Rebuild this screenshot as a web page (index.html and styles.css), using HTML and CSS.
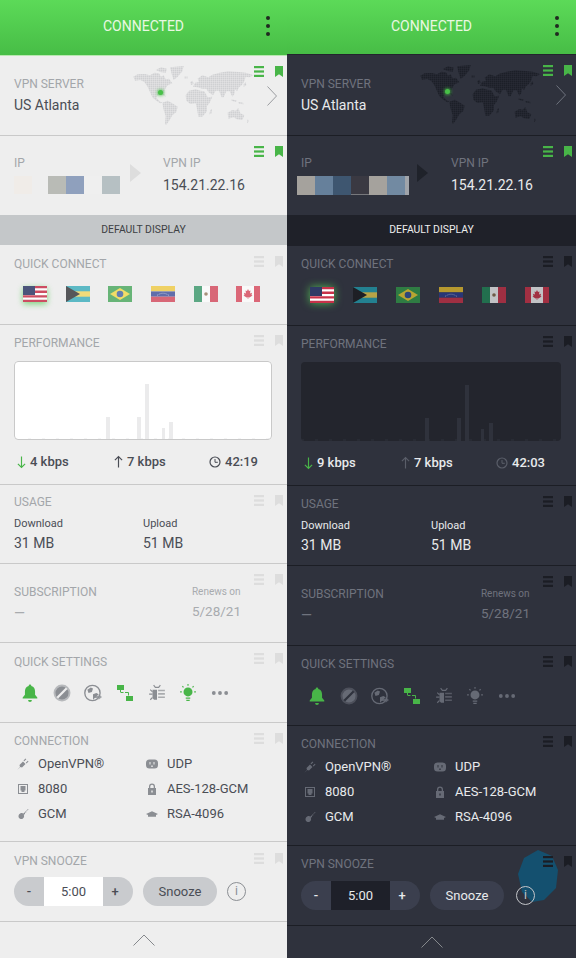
FILE: index.html
```html
<!DOCTYPE html>
<html lang="en">
<head>
  <meta charset="UTF-8">
  <title>VPN Dashboard</title>
  <link rel="stylesheet" href="styles.css">
</head>
<body>
  <svg class="defs" width="0" height="0">
    <defs>
      <pattern id="dots-light" width="6" height="6" patternUnits="userSpaceOnUse"><rect width="5" height="5" fill="#cfd0d2"/></pattern>
      <pattern id="dots-dark" width="6" height="6" patternUnits="userSpaceOnUse"><rect width="5" height="5" fill="#1c1f27"/></pattern>
    </defs>
    <symbol id="menu" viewBox="0 0 10 11"><rect width="10" height="2.2"/><rect y="4.4" width="10" height="2.2"/><rect y="8.8" width="10" height="2.2"/></symbol>
    <symbol id="mark" viewBox="0 0 8 11"><path d="M0 0h8v11L4 8.3 0 11z"/></symbol>
    <symbol id="map" viewBox="0 0 489 240">
      <path d="M25 62 38 55 60 54 75 58 88 50 102 52 108 62 116 58 122 70 132 68 142 82 128 88 120 100 118 112 122 122 112 116 98 118 94 126 104 136 112 140 106 142 94 134 82 124 76 110 68 92 58 78 46 72 30 74z"/>
      <path d="M92 42 108 34 126 38 122 50 106 48z"/>
      <path d="M135 34 176 30 172 46 158 62 146 72 140 54z"/>
      <path d="M178 62h10v5h-10z"/>
      <path d="M196 78l7-4 3 10-8 3z"/>
      <path d="M112 140 128 134 142 142 158 152 154 168 142 178 134 192 124 206 120 204 122 180 116 162z"/>
      <path d="M182 118 192 104 212 100 226 104 238 106 248 124 262 122 254 140 246 150 246 166 232 182 220 182 216 158 212 142 196 144 184 134z"/>
      <path d="M256 162l5-3-2 14-6 2z"/>
      <path d="M204 92 210 80 222 78 218 68 232 58 250 64 262 56 284 50 310 46 340 48 362 50 386 58 372 64 362 62 358 76 350 88 342 94 336 106 330 100 328 114 322 122 314 106 304 106 296 124 290 124 282 104 272 104 264 118 250 108 244 98 232 98 218 94z"/>
      <path d="M356 84l6-5 2 8-8 6z"/>
      <path d="M320 130l16 4-4 4-12-4zM340 138l14 2 2 5-14-2z"/>
      <path d="M308 170 322 162 332 164 340 156 346 172 358 178 352 192 336 190 326 184 310 188z"/>
      <path d="M368 190l4 6-6 6z"/>
    </symbol>
    <symbol id="us" viewBox="0 0 24 16">
      <rect width="24" height="16" fill="#fff"/>
      <path d="M0 0h24v2.3H0zM0 4.6h24v2.3H0zM0 9.2h24v2.3H0zM0 13.7h24V16H0z" fill="#c8324a"/>
      <rect width="12" height="9" fill="#2f3a66"/>
    </symbol>
    <symbol id="bs" viewBox="0 0 24 16">
      <rect width="24" height="16" fill="#1fa3b5"/><rect y="5.3" width="24" height="5.4" fill="#f2d34a"/>
      <path d="M0 0 14 8 0 16z" fill="#17181c"/>
    </symbol>
    <symbol id="br" viewBox="0 0 24 16">
      <rect width="24" height="16" fill="#2f9c46"/><path d="M12 2 22 8 12 14 2 8z" fill="#f3d62e"/><circle cx="12" cy="8" r="3.3" fill="#2b4f96"/>
    </symbol>
    <symbol id="ve" viewBox="0 0 24 16">
      <rect width="24" height="5.4" fill="#f0c52a"/><rect y="5.4" width="24" height="5.3" fill="#26398f"/><rect y="10.7" width="24" height="5.3" fill="#cf2f45"/>
      <path d="M6 9.5Q12 5 18 9.5" fill="none" stroke="#dfe3ef" stroke-width=".7" stroke-dasharray="1 1"/>
    </symbol>
    <symbol id="mx" viewBox="0 0 24 16">
      <rect width="8" height="16" fill="#1d8a56"/><rect x="8" width="8" height="16" fill="#fff"/><rect x="16" width="8" height="16" fill="#cf2f45"/><circle cx="12" cy="8" r="1.8" fill="#8a6a4a"/>
    </symbol>
    <symbol id="ca" viewBox="0 0 24 16">
      <rect width="24" height="16" fill="#fff"/><rect width="6" height="16" fill="#d32f45"/><rect x="18" width="6" height="16" fill="#d32f45"/>
      <path d="M12 3 13 5 14.5 4.5 14 7.5 16 6.8 15.5 9 16.5 9.5 13.5 11.5 12.3 11.3V13H11.7V11.3L10.5 11.5 7.5 9.5 8.5 9 8 6.8 10 7.5 9.5 4.5 11 5z" fill="#d32f45"/>
    </symbol>
    <symbol id="down" viewBox="0 0 10 14"><path d="M5 1v12M1 9l4 4 4-4" fill="none" stroke="currentColor" stroke-width="1.3"/></symbol>
    <symbol id="up" viewBox="0 0 10 14"><path d="M5 13V1M1 5l4-4 4 4" fill="none" stroke="currentColor" stroke-width="1.3"/></symbol>
    <symbol id="clock" viewBox="0 0 12 12"><circle cx="6" cy="6" r="5" fill="none" stroke="currentColor" stroke-width="1.2"/><path d="M6 3v3.3h2.8" fill="none" stroke="currentColor"/></symbol>
    <symbol id="bell" viewBox="0 0 16 16"><path d="M8 .5a1.2 1.2 0 0 1 1.2 1.2c2.4.6 3.3 2.6 3.3 5v2.8l2 2.5v.8H1.5v-.8l2-2.5V6.700c0-2.400.9-4.400 3.300-5A1.200 1.200 0 0 1 8 .5zM6.300 14.200h3.400a1.700 1.700 0 0 1-3.400 0z"/></symbol>
    <symbol id="block" viewBox="0 0 16 16"><circle cx="8" cy="8" r="7.5" opacity=".55"/><circle cx="8" cy="8" r="5.8"/><path d="M3.800 12.200 12.200 3.800" stroke="var(--bg)" stroke-width="2"/></symbol>
    <symbol id="globe" viewBox="0 0 16 16"><circle cx="7.500" cy="8" r="6.800" fill="none" stroke="currentColor" stroke-width="1.200"/><path d="M3 5l3-2 2 1-1 3-3 1zM8 9l3-1 2 1-3 3-2 2z"/><path d="M8 10.500h5V9l3 2.500L13 14v-1.500H8z" opacity=".8"/></symbol>
    <symbol id="net" viewBox="0 0 18 18"><rect x="1" y="1" width="7" height="5"/><rect x="10" y="12" width="7" height="5"/><path d="M4.500 6v2M4.500 8.500h3M9 8.500h3.500v3" fill="none" stroke="currentColor" stroke-width="1"/></symbol>
    <symbol id="bug" viewBox="0 0 16 16"><path d="M5 1l1.500 2h3L11 1M2 5l2 2M1 9h3M2 14l2-2" fill="none" stroke="currentColor"/><path d="M4 5h4v9H6.500C5 14 4 13 4 11z"/><path d="M9 5h6v1.500H9zM9 8h6v1.500H9zM9 11h6v1.500H9z" opacity=".7"/></symbol>
    <symbol id="bulb" viewBox="0 0 16 16"><circle cx="8" cy="7" r="4"/><path d="M6 12.500h4M6.500 14.500h3M8 0v1.500M1 7h1.500M13.500 7H15M3 2l1 1M13 2l-1 1" fill="none" stroke="currentColor"/></symbol>
    <symbol id="dots" viewBox="0 0 16 16"><circle cx="2.500" cy="8" r="1.700"/><circle cx="8" cy="8" r="1.700"/><circle cx="13.500" cy="8" r="1.700"/></symbol>
    <symbol id="plug" viewBox="0 0 12 12"><path d="M0 12 3 9 2.500 7 6 3.500 8.500 6 5 9.500 3.500 9zM6.500 2.500 8.500.5 9.300 1.300 7.300 3.300zM8.800 4.800 10.800 2.800 11.500 3.500 9.500 5.500z"/></symbol>
    <symbol id="port" viewBox="0 0 12 12"><path d="M1 1h10v10H1zM2 2v8h8V2zM3.500 3h5v4.500h-1V9h-3V7.500h-1z" fill-rule="evenodd"/></symbol>
    <symbol id="key" viewBox="0 0 12 12"><path d="M11 1 6.500 5.500C5 4.500 3 5 2 6.500 1 8 1.500 10 3 10.700 4.500 11.500 6.500 10.800 7 9 7.200 8.200 7.100 7.500 6.800 6.800L8 6V4.500H9.200V3.200L11.500 1.500z"/></symbol>
    <symbol id="outlet" viewBox="0 0 12 12"><path d="M3.500 1.500h5a3.500 3.500 0 0 1 3.500 3.500v2a3.500 3.500 0 0 1-3.500 3.500h-5A3.500 3.500 0 0 1 0 7V5a3.500 3.500 0 0 1 3.500-3.500zM3.500 4v2.500h1V4zM7.500 4v2.500h1V4zM5.300 7.500v1.500h1.400V7.500z" fill-rule="evenodd"/></symbol>
    <symbol id="lock" viewBox="0 0 12 12"><path d="M2 5h1V3.500a3 3 0 0 1 6 0V5h1v7H2zM4.300 5h3.400V3.500a1.700 1.700 0 0 0-3.400 0zM5.300 7.500v2h1.400v-2z" fill-rule="evenodd"/></symbol>
    <symbol id="cap" viewBox="0 0 12 12"><path d="M0 6 6 3.200 12 6 10 7v1.800H2V7z"/></symbol>
  </svg>

  <main class="screens">
    <div class="panel light">
      <header class="topbar"><span>CONNECTED</span><i class="kebab"></i></header>

      <section class="card card-server">
        <svg class="worldmap"><use href="#map"/></svg><b class="pin"></b>
        <div class="corner on"><svg class="ic-menu"><use href="#menu"/></svg><svg class="ic-mark"><use href="#mark"/></svg></div>
        <h2>VPN SERVER</h2>
        <p class="value">US Atlanta</p>
        <svg class="chevron" viewBox="0 0 10 20"><path d="M.5.5 9.500 10 .5 19.500"/></svg>
      </section>

      <section class="card card-ip">
        <div class="corner on"><svg class="ic-menu"><use href="#menu"/></svg><svg class="ic-mark"><use href="#mark"/></svg></div>
        <div class="ip-col">
          <h2>IP</h2>
          <div class="blur-ip">
            <span class="px1"></span><span class="gap"></span><span class="px2"></span><span class="px3"></span><span class="px4"></span><span class="px5"></span>
          </div>
        </div>
        <i class="ip-arrow"></i>
        <div class="ip-col ip-vpn">
          <h2>VPN IP</h2>
          <p class="value">154.21.22.16</p>
        </div>
      </section>

      <div class="display-bar">DEFAULT DISPLAY</div>

      <section class="card card-quick">
        <div class="corner"><svg class="ic-menu"><use href="#menu"/></svg><svg class="ic-mark"><use href="#mark"/></svg></div>
        <h2>QUICK CONNECT</h2>
        <div class="flags">
          <svg class="flag active"><use href="#us"/></svg>
          <svg class="flag"><use href="#bs"/></svg>
          <svg class="flag"><use href="#br"/></svg>
          <svg class="flag"><use href="#ve"/></svg>
          <svg class="flag"><use href="#mx"/></svg>
          <svg class="flag"><use href="#ca"/></svg>
        </div>
      </section>

      <section class="card card-perf">
        <div class="corner"><svg class="ic-menu"><use href="#menu"/></svg><svg class="ic-mark"><use href="#mark"/></svg></div>
        <h2>PERFORMANCE</h2>
        <svg class="chart" viewBox="0 0 258 79">
          <path class="ticks" d="M0 78h258"/>
          <rect x="92" y="56" width="4" height="23"/><rect x="123" y="56" width="4" height="23"/><rect x="131" y="23" width="4" height="56"/><rect x="148" y="67" width="3" height="12"/><rect x="155" y="61" width="4" height="18"/>
        </svg>
        <div class="stats">
          <span class="stat"><svg class="arrow green"><use href="#down"/></svg>4 kbps</span>
          <span class="stat"><svg class="arrow"><use href="#up"/></svg>7 kbps</span>
          <span class="stat"><svg class="clock"><use href="#clock"/></svg>42:19</span>
        </div>
      </section>

      <section class="card card-usage">
        <div class="corner"><svg class="ic-menu"><use href="#menu"/></svg><svg class="ic-mark"><use href="#mark"/></svg></div>
        <h2>USAGE</h2>
        <div class="usage-grid">
          <div><p class="caption">Download</p><p class="value">31 MB</p></div>
          <div><p class="caption">Upload</p><p class="value">51 MB</p></div>
        </div>
      </section>

      <section class="card card-sub">
        <div class="corner"><svg class="ic-menu"><use href="#menu"/></svg><svg class="ic-mark"><use href="#mark"/></svg></div>
        <div class="sub-col"><h2>SUBSCRIPTION</h2><p class="value dim">—</p></div>
        <div class="sub-col renews"><p class="caption dim">Renews on</p><p class="value dim">5/28/21</p></div>
      </section>

      <section class="card card-settings">
        <div class="corner"><svg class="ic-menu"><use href="#menu"/></svg><svg class="ic-mark"><use href="#mark"/></svg></div>
        <h2>QUICK SETTINGS</h2>
        <div class="settings">
          <svg class="green"><use href="#bell"/></svg>
          <svg class="grey"><use href="#block"/></svg>
          <svg class="grey"><use href="#globe"/></svg>
          <svg class="green"><use href="#net"/></svg>
          <svg class="grey"><use href="#bug"/></svg>
          <svg class="green"><use href="#bulb"/></svg>
          <svg class="grey"><use href="#dots"/></svg>
        </div>
      </section>

      <section class="card card-conn">
        <div class="corner"><svg class="ic-menu"><use href="#menu"/></svg><svg class="ic-mark"><use href="#mark"/></svg></div>
        <h2>CONNECTION</h2>
        <div class="conn-grid">
          <span class="conn"><svg><use href="#plug"/></svg>OpenVPN®</span>
          <span class="conn"><svg><use href="#outlet"/></svg>UDP</span>
          <span class="conn"><svg><use href="#port"/></svg>8080</span>
          <span class="conn"><svg><use href="#lock"/></svg>AES-128-GCM</span>
          <span class="conn"><svg><use href="#key"/></svg>GCM</span>
          <span class="conn"><svg><use href="#cap"/></svg>RSA-4096</span>
        </div>
      </section>

      <section class="card card-snooze">
        <div class="corner"><svg class="ic-menu"><use href="#menu"/></svg><svg class="ic-mark"><use href="#mark"/></svg></div>
        <h2>VPN SNOOZE</h2>
        <div class="snooze-row">
          <div class="stepper"><span>-</span><b>5:00</b><span class="plus">+</span></div>
          <button class="snooze-btn">Snooze</button>
          <span class="info">i</span>
        </div>
      </section>

      <footer class="foot"><svg viewBox="0 0 22 12"><path d="M.5 11.500 11 1l10.500 10.500"/></svg></footer>
    </div>

    <div class="panel dark">
      <header class="topbar"><span>CONNECTED</span><i class="kebab"></i></header>

      <section class="card card-server">
        <svg class="worldmap"><use href="#map"/></svg><b class="pin"></b>
        <div class="corner on"><svg class="ic-menu"><use href="#menu"/></svg><svg class="ic-mark"><use href="#mark"/></svg></div>
        <h2>VPN SERVER</h2>
        <p class="value">US Atlanta</p>
        <svg class="chevron" viewBox="0 0 10 20"><path d="M.5.5 9.500 10 .5 19.500"/></svg>
      </section>

      <section class="card card-ip">
        <div class="corner on"><svg class="ic-menu"><use href="#menu"/></svg><svg class="ic-mark"><use href="#mark"/></svg></div>
        <div class="ip-col">
          <h2>IP</h2>
          <div class="blur-ip">
            <span class="px1"></span><span class="px2"></span><span class="px3"></span><span class="px4"></span><span class="px5"></span><span class="px6"></span><span class="px7"></span>
          </div>
        </div>
        <i class="ip-arrow"></i>
        <div class="ip-col ip-vpn">
          <h2>VPN IP</h2>
          <p class="value">154.21.22.16</p>
        </div>
      </section>

      <div class="display-bar">DEFAULT DISPLAY</div>

      <section class="card card-quick">
        <div class="corner"><svg class="ic-menu"><use href="#menu"/></svg><svg class="ic-mark"><use href="#mark"/></svg></div>
        <h2>QUICK CONNECT</h2>
        <div class="flags">
          <svg class="flag active"><use href="#us"/></svg>
          <svg class="flag"><use href="#bs"/></svg>
          <svg class="flag"><use href="#br"/></svg>
          <svg class="flag"><use href="#ve"/></svg>
          <svg class="flag"><use href="#mx"/></svg>
          <svg class="flag"><use href="#ca"/></svg>
        </div>
      </section>

      <section class="card card-perf">
        <div class="corner"><svg class="ic-menu"><use href="#menu"/></svg><svg class="ic-mark"><use href="#mark"/></svg></div>
        <h2>PERFORMANCE</h2>
        <svg class="chart" viewBox="0 0 260 79">
          <path class="ticks" d="M0 78h260"/>
          <rect x="124" y="56" width="4" height="23"/><rect x="156" y="56" width="4" height="23"/><rect x="164" y="23" width="4" height="56"/><rect x="180" y="67" width="3" height="12"/><rect x="188" y="61" width="4" height="18"/>
        </svg>
        <div class="stats">
          <span class="stat"><svg class="arrow green"><use href="#down"/></svg>9 kbps</span>
          <span class="stat"><svg class="arrow faint"><use href="#up"/></svg>7 kbps</span>
          <span class="stat"><svg class="clock faint"><use href="#clock"/></svg>42:03</span>
        </div>
      </section>

      <section class="card card-usage">
        <div class="corner"><svg class="ic-menu"><use href="#menu"/></svg><svg class="ic-mark"><use href="#mark"/></svg></div>
        <h2>USAGE</h2>
        <div class="usage-grid">
          <div><p class="caption">Download</p><p class="value">31 MB</p></div>
          <div><p class="caption">Upload</p><p class="value">51 MB</p></div>
        </div>
      </section>

      <section class="card card-sub">
        <div class="corner"><svg class="ic-menu"><use href="#menu"/></svg><svg class="ic-mark"><use href="#mark"/></svg></div>
        <div class="sub-col"><h2>SUBSCRIPTION</h2><p class="value dim">—</p></div>
        <div class="sub-col renews"><p class="caption dim">Renews on</p><p class="value dim">5/28/21</p></div>
      </section>

      <section class="card card-settings">
        <div class="corner"><svg class="ic-menu"><use href="#menu"/></svg><svg class="ic-mark"><use href="#mark"/></svg></div>
        <h2>QUICK SETTINGS</h2>
        <div class="settings">
          <svg class="green"><use href="#bell"/></svg>
          <svg class="grey"><use href="#block"/></svg>
          <svg class="grey"><use href="#globe"/></svg>
          <svg class="green"><use href="#net"/></svg>
          <svg class="grey"><use href="#bug"/></svg>
          <svg class="grey"><use href="#bulb"/></svg>
          <svg class="grey"><use href="#dots"/></svg>
        </div>
      </section>

      <section class="card card-conn">
        <div class="corner"><svg class="ic-menu"><use href="#menu"/></svg><svg class="ic-mark"><use href="#mark"/></svg></div>
        <h2>CONNECTION</h2>
        <div class="conn-grid">
          <span class="conn"><svg><use href="#plug"/></svg>OpenVPN®</span>
          <span class="conn"><svg><use href="#outlet"/></svg>UDP</span>
          <span class="conn"><svg><use href="#port"/></svg>8080</span>
          <span class="conn"><svg><use href="#lock"/></svg>AES-128-GCM</span>
          <span class="conn"><svg><use href="#key"/></svg>GCM</span>
          <span class="conn"><svg><use href="#cap"/></svg>RSA-4096</span>
        </div>
      </section>

      <section class="card card-snooze">
        <svg class="watermark" viewBox="0 0 40 52"><path d="M20 0 34 6 40 20 38 38 26 50 14 52 4 42 0 24 6 8z"/></svg>
        <div class="corner"><svg class="ic-menu"><use href="#menu"/></svg><svg class="ic-mark"><use href="#mark"/></svg></div>
        <h2>VPN SNOOZE</h2>
        <div class="snooze-row">
          <div class="stepper"><span>-</span><b>5:00</b><span class="plus">+</span></div>
          <button class="snooze-btn">Snooze</button>
          <span class="info">i</span>
        </div>
      </section>

      <footer class="foot"><svg viewBox="0 0 22 12"><path d="M.5 11.500 11 1l10.500 10.500"/></svg></footer>
    </div>
  </main>
</body>
</html>
```

FILE: styles.css
```css
* {
  box-sizing: border-box;
}

body {
  margin: 0;
  font-family: Roboto, "Liberation Sans", sans-serif;
  overflow: hidden;
}

h2, p {
  margin: 0;
  font-weight: 400;
}

.defs {
  position: absolute;
}

.screens {
  display: grid;
  grid-template-columns: 287px 289px;
  height: 958px;
}

.panel {
  display: flex;
  flex-direction: column;
  height: 958px;
  background: var(--bg);
}

.light {
  --bg: #eeeeee;
  --line: #c9c9c9;
  --label: #a3a6aa;
  --text: #4a4d55;
  --dim: #a8abae;
  --ghost: #dddddd;
  --icon: #8b8e93;
  --bar: #c4c7c9;
  --bar-text: #3c3f44;
  --chart: #ffffff;
  --chart-bar: #ebebec;
  --pill: #c9cbce;
  --field: #ffffff;
}

.dark {
  --bg: #2f323d;
  --line: #1c1e25;
  --label: #6f737e;
  --text: #e8eaec;
  --dim: #6f737e;
  --ghost: #1b1d24;
  --icon: #666a75;
  --bar: #1f2129;
  --bar-text: #eeeeee;
  --chart: #23252d;
  --chart-bar: #2f323c;
  --pill: #3b3f4e;
  --field: #1e2029;
}

/* top green bar */
.topbar {
  position: relative;
  display: flex;
  align-items: center;
  justify-content: center;
  flex: none;
  height: 56px;
  padding-bottom: 3px;
  color: #e9f8e2;
  font-size: 14px;
  background: linear-gradient(#5cda58, #47bd46);
  border-bottom: 1px solid #b8e8b0;
}

.dark .topbar {
  height: 55px;
  border-bottom-color: #23252d;
}

.kebab {
  position: absolute;
  top: 16px;
  left: 266px;
  width: 4px;
  height: 4px;
  border-radius: 50%;
  background: #202a20;
  box-shadow: 0 8px 0 #202a20, 0 16px 0 #202a20;
}

.dark .kebab {
  left: 268px;
}

.card {
  position: relative;
  flex: none;
  padding: 11px 14px 0;
  border-bottom: 1px solid var(--line);
}

.card h2 {
  font-size: 12px;
  line-height: 14px;
  color: var(--label);
}

.value {
  font-size: 14px;
  line-height: 18px;
  color: var(--text);
}

.value.dim,
.caption.dim {
  color: var(--dim);
}

.caption {
  font-size: 11px;
  line-height: 14px;
  color: var(--text);
}

.corner {
  position: absolute;
  top: 10px;
  right: 4px;
  z-index: 2;
  display: flex;
  gap: 11px;
  fill: var(--ghost);
}

.corner.on {
  fill: #48b548;
}

.ic-menu {
  width: 10px;
  height: 11px;
}

.ic-mark {
  width: 8px;
  height: 11px;
}

/* vpn server */
.card-server {
  height: 80px;
  padding-top: 21px;
}

.dark .card-server {
  height: 81px;
  padding-top: 22px;
}

.card-server .value {
  margin-top: 5px;
}

.worldmap {
  position: absolute;
  top: 0;
  left: 125px;
  width: 163px;
  height: 80px;
  filter: blur(0.4px);
}

.light .worldmap {
  fill: url(#dots-light);
}

.dark .worldmap {
  fill: url(#dots-dark);
}

.pin {
  position: absolute;
  top: 34px;
  left: 158px;
  width: 5px;
  height: 5px;
  border-radius: 50%;
  background: #48c048;
  box-shadow: 0 0 3px 1px rgba(72, 192, 72, 0.7);
}

.chevron {
  position: absolute;
  top: 30px;
  left: 267px;
  width: 10px;
  height: 20px;
  fill: none;
  stroke: #9a9ca0;
}

.dark .chevron {
  left: 269px;
  stroke: #6f737e;
}

/* ip row */
.card-ip {
  display: flex;
  height: 79px;
  padding-top: 20px;
  border-bottom: none;
}

.ip-col {
  flex: none;
  width: 116px;
}

.ip-vpn {
  margin-left: 22px;
}

.dark .ip-vpn {
  margin-left: 23px;
}

.ip-vpn .value {
  margin-top: 6px;
}

.blur-ip {
  display: flex;
  height: 18px;
  margin-top: 6px;
  filter: blur(0.4px);
}

.blur-ip span {
  width: 18px;
}

.blur-ip .gap {
  width: 16px;
}

.light .px1 { background: #f0ece8; }
.light .px2 { background: #b9bbb6; }
.light .px3 { background: #8fa0bd; }
.light .px4 { background: #efefef; }
.light .px5 { background: #b6c0c3; }

.dark .blur-ip {
  margin-left: -4px;
  height: 19px;
}

.dark .px1 { background: #a5a29d; }
.dark .px2 { background: #66809b; }
.dark .px3 { background: #3e5670; }
.dark .px4 { background: #3a3942; border-bottom: 1px solid #77787c; }
.dark .px5 { background: #a5a29d; }
.dark .px6 { background: #728aa2; }
.dark .blur-ip .px7 { width: 4px; background: #a0a4aa; }

.ip-arrow {
  align-self: flex-start;
  width: 0;
  height: 0;
  margin-top: 8px;
  border-style: solid;
  border-width: 9px 0 9px 11px;
  border-color: transparent transparent transparent var(--ghost);
}

.dark .ip-arrow {
  border-left-color: #1f222a;
}

.display-bar {
  flex: none;
  height: 30px;
  font-size: 10.4px;
  line-height: 30px;
  text-align: center;
  color: var(--bar-text);
  background: var(--bar);
}

.dark .display-bar {
  height: 31px;
}

/* quick connect */
.card-quick {
  height: 80px;
}

.light .card-quick,
.light .card-settings,
.light .card-snooze {
  padding-top: 12px;
}

.light .card-quick .corner,
.light .card-snooze .corner {
  top: 11px;
}

.flags {
  display: flex;
  gap: 18.7px;
  margin-top: 15px;
  padding-left: 9px;
}

.dark .flags {
  gap: 19px;
  margin-top: 16px;
}

.flag {
  width: 24px;
  height: 16px;
  opacity: 0.7;
  filter: blur(0.3px);
}

.flag.active {
  opacity: 0.85;
  filter: drop-shadow(0 2px 3px rgba(70, 200, 70, 0.8));
}

.dark .flag.active {
  opacity: 1;
  filter: drop-shadow(0 0 4px rgba(90, 220, 90, 0.8));
}

/* performance */
.card-perf {
  height: 160px;
}

.chart {
  display: block;
  width: 258px;
  height: 79px;
  margin-top: 11px;
  background: var(--chart);
  border-radius: 4px;
  fill: var(--chart-bar);
  outline: 1px solid var(--line);
  outline-offset: -1px;
}

.dark .chart {
  width: 260px;
  outline: none;
}

.ticks {
  fill: none;
  stroke: var(--chart-bar);
  stroke-dasharray: 3 11;
  stroke-width: 1;
}

.stats {
  display: grid;
  grid-template-columns: 97px 95px auto;
  margin-top: 13px;
  padding-left: 3px;
}

.stat {
  display: flex;
  align-items: center;
  gap: 4px;
  font-size: 13px;
  font-weight: 500;
  line-height: 18px;
  color: var(--text);
}

.arrow {
  width: 9px;
  height: 14px;
  color: var(--text);
}

.clock {
  width: 12px;
  height: 12px;
  color: var(--text);
}

.green {
  color: #48b548;
  fill: #48b548;
}

.stat .faint {
  color: #5a5e69;
}

/* usage */
.card-usage {
  height: 79px;
  padding-top: 10px;
}

.dark .card-usage {
  height: 80px;
  padding-top: 11px;
}

.usage-grid {
  display: grid;
  grid-template-columns: 129px auto;
  margin-top: 8px;
}

.dark .usage-grid {
  grid-template-columns: 130px auto;
}

.usage-grid .value {
  margin-top: 3px;
}

/* subscription */
.card-sub {
  display: flex;
  justify-content: space-between;
  height: 79px;
  padding: 21px 46px 0 14px;
}

.dark .card-sub {
  height: 80px;
}

.sub-col .value {
  margin-top: 5px;
}

.renews .caption {
  font-size: 10px;
}

.renews .value {
  margin-top: 3px;
  font-size: 13.5px;
}

/* quick settings */
.card-settings {
  height: 80px;
}

.settings {
  display: flex;
  gap: 13.7px;
  align-items: center;
  margin-top: 15px;
  padding-left: 7px;
}

.dark .settings {
  margin-top: 16px;
}

.settings svg {
  width: 18px;
  height: 18px;
}

.grey {
  color: var(--icon);
  fill: var(--icon);
}

/* connection */
.card-conn {
  height: 119px;
}

.dark .card-conn {
  height: 120px;
}

.conn-grid {
  display: grid;
  grid-template-columns: 132px auto;
  grid-auto-rows: 25px;
  margin-top: 3px;
}

.dark .conn-grid {
  grid-template-columns: 133px auto;
}

.conn {
  display: flex;
  align-items: center;
  gap: 9px;
  padding-left: 3px;
  font-size: 13px;
  color: var(--text);
}

.conn:nth-child(even) {
  padding-left: 0;
}

.conn svg {
  width: 12px;
  height: 12px;
  fill: var(--icon);
}

/* snooze */
.card-snooze {
  height: 80px;
}

.watermark {
  position: absolute;
  top: 4px;
  left: 231px;
  width: 40px;
  height: 52px;
  fill: #14506f;
}

.snooze-row {
  position: relative;
  display: flex;
  align-items: center;
  margin-top: 9px;
}

.dark .snooze-row {
  margin-top: 10px;
}

.stepper {
  display: flex;
  width: 119px;
  height: 29px;
  border-radius: 15px;
  overflow: hidden;
  background: var(--pill);
  color: var(--text);
  font-size: 13px;
  line-height: 29px;
  text-align: center;
}

.stepper span {
  width: 30px;
  font-weight: 500;
}

.stepper .plus {
  padding-right: 6px;
}

.stepper b {
  width: 59px;
  font-weight: 400;
  background: var(--field);
}

.snooze-btn {
  width: 74px;
  height: 29px;
  margin-left: 10px;
  padding: 0;
  border: none;
  border-radius: 15px;
  font: 13px Roboto, sans-serif;
  color: var(--text);
  background: var(--pill);
}

.info {
  width: 19px;
  height: 19px;
  margin-left: 10px;
  border: 1px solid #8b8e93;
  border-radius: 50%;
  font-size: 12px;
  line-height: 17px;
  text-align: center;
  color: #8b8e93;
}

.dark .info {
  margin-left: 12px;
  border-color: #c4c6ca;
  color: #c4c6ca;
}

.foot {
  display: flex;
  flex: 1;
  align-items: center;
  justify-content: center;
}

.foot svg {
  width: 22px;
  height: 12px;
  fill: none;
  stroke: #85888c;
}
```
